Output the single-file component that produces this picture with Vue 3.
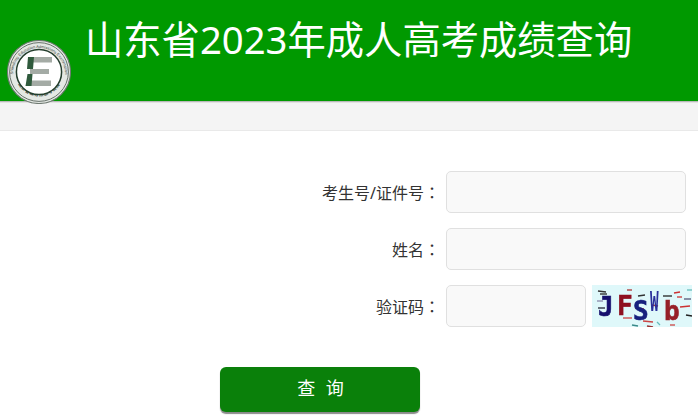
<script setup>
const rows = [
  { label: '考生号/证件号', small: false },
  { label: '姓名', small: false },
  { label: '验证码', small: true },
]
const noise = [
  [6,6,14,7,'#333'],[8,9,15,9,'#222'],[35,5,40,5,'#a33'],[31,11,38,11,'#3a8a8a'],[46,11,53,10,'#333'],
  [71,11,80,11,'#222'],[82,8,88,7,'#c33'],[85,12,90,12,'#c33'],[95,5,100,5,'#6bb'],[6,23,13,23,'#223'],
  [43,23,52,24,'#d33'],[88,22,98,21,'#c33'],[94,30,100,31,'#222'],[5,16,11,16,'#88a'],[31,33,40,33,'#c44'],
  [40,40,46,41,'#3a8a8a'],[51,36,61,37,'#c44'],[55,41,61,42,'#933'],[65,37,68,40,'#6bb'],[78,33,85,33,'#c33'],
  [78,40,83,40,'#c44'],[60,20,66,21,'#a33'],[92,14,99,14,'#557'],
]
</script>

<template>
  <div class="page">
    <header class="banner">
      <svg class="logo" viewBox="0 0 64 64" aria-hidden="true">
        <defs>
          <path id="ring-top" d="M6 34A26 26 0 0 1 58 34" />
          <path id="ring-bottom" d="M9 40A24.5 24.5 0 0 0 55 40" />
        </defs>
        <circle cx="32" cy="32" r="31.5" fill="#e4e8e4" stroke="#6f7a72" stroke-width="1.1" />
        <circle cx="32" cy="32" r="29.4" fill="none" stroke="#59655c" stroke-width=".9" />
        <text class="ring-en"><textPath href="#ring-top" startOffset="50%" text-anchor="middle">Shandong Education Admissions Examination</textPath></text>
        <text class="ring-cn"><textPath href="#ring-bottom" startOffset="50%" text-anchor="middle">山东省教育招生考试院</textPath></text>
        <circle cx="32" cy="32" r="22.6" fill="#fff" stroke="#233d2c" stroke-width="1.5" />
        <rect x="21" y="17" width="24" height="5.5" fill="#a4aba5" />
        <rect x="23" y="29" width="19" height="5" fill="#a4aba5" />
        <rect x="20" y="40.5" width="24" height="5.5" fill="#a4aba5" />
        <path d="M21 17h6l-1 12h-6zM20.5 34h5l-1 12h-6z" fill="#2f5a3c" />
      </svg>
      <h1 class="title">山东省2023年成人高考成绩查询</h1>
    </header>
    <div class="strip"></div>
    <form class="form" @submit.prevent>
      <div v-for="row in rows" :key="row.label" class="row">
        <label class="label">{{ row.label }}<span class="colon">：</span></label>
        <input class="field" :class="{ short: row.small }" type="text" />
        <svg v-if="row.small" class="captcha" viewBox="0 0 100 42" aria-label="验证码">
          <rect width="100" height="42" fill="#dff8fa" />
          <g class="soft">
            <line v-for="(n, i) in noise" :key="i" :x1="n[0]" :y1="n[1]" :x2="n[2]" :y2="n[3]" :stroke="n[4]" stroke-width="1.3" />
            <text x="6" y="31" class="cap" fill="#16106e" stroke="#16106e">J</text>
            <text x="25" y="30" class="cap" fill="#8e1020" stroke="#8e1020">F</text>
            <text x="41" y="35" class="cap" fill="#16207e" stroke="#16207e">S</text>
            <text transform="translate(58 26) scale(.55 1)" class="cap" fill="#2a2f9a">W</text>
            <text x="72" y="35" class="cap" fill="#962028" stroke="#962028">b</text>
          </g>
        </svg>
      </div>
      <button class="submit" type="submit"><span>查 询</span></button>
    </form>
  </div>
</template>

<style scoped>
.page {
  width: 698px;
  height: 417px;
  overflow: hidden;
  background: #fff;
  font-family: "Noto Sans", "Noto Sans CJK SC", sans-serif;
}
.banner {
  position: relative;
  height: 101px;
  padding-left: 85px;
  background: #009900;
  box-shadow: 0 1px 0 #b9b9b9, 0 2px 0 #e2e2e2;
}
.title {
  margin: 0;
  padding-top: 11px;
  font-size: 38.3px;
  line-height: 56px;
  font-weight: 400;
  color: #fff;
  white-space: nowrap;
}
.logo {
  position: absolute;
  left: 7px;
  top: 40px;
  width: 64px;
  height: 64px;
  z-index: 1;
}
.ring-en {
  font-family: "Liberation Sans", sans-serif;
  font-size: 4px;
  fill: #36433a;
}
.ring-cn {
  font-family: "Noto Sans CJK SC", sans-serif;
  font-size: 4.4px;
  font-weight: 700;
  letter-spacing: 0.6px;
  fill: #2c3a30;
}
.strip {
  height: 29px;
  background: #f4f4f4;
  border-bottom: 1px solid #e9e9e9;
}
.form {
  display: flex;
  flex-direction: column;
  gap: 15px;
  padding-top: 40px;
}
.row {
  display: flex;
  align-items: center;
  height: 42px;
}
.label {
  box-sizing: border-box;
  width: 446px;
  padding-right: 6px;
  text-align: right;
  font-size: 16px;
  color: #333;
}
.colon {
  font-family: "Noto Sans CJK TC", sans-serif;
}
.field {
  box-sizing: border-box;
  width: 240px;
  height: 42px;
  padding: 0 10px;
  background: #f9f9f9;
  border: 1px solid #e0e0e0;
  border-radius: 5px;
  outline: none;
}
.field.short {
  width: 140px;
}
.captcha {
  width: 100px;
  height: 42px;
  margin-left: 6px;
  flex: none;
}
.soft {
  filter: blur(0.35px);
}
.cap {
  font-family: "DejaVu Sans Mono", monospace;
  font-weight: 700;
  font-size: 26px;
  stroke-width: 0.6px;
}
.submit {
  align-self: flex-start;
  width: 200px;
  height: 45px;
  margin: 25px 0 0 220px;
  padding: 0 0 6px 4px;
  background: #0a800a;
  border: 0;
  border-radius: 6px;
  box-shadow: 0 2px 1px #8a8a8a;
  color: #fff;
  font-family: inherit;
  font-size: 18px;
  letter-spacing: 3px;
}
</style>
